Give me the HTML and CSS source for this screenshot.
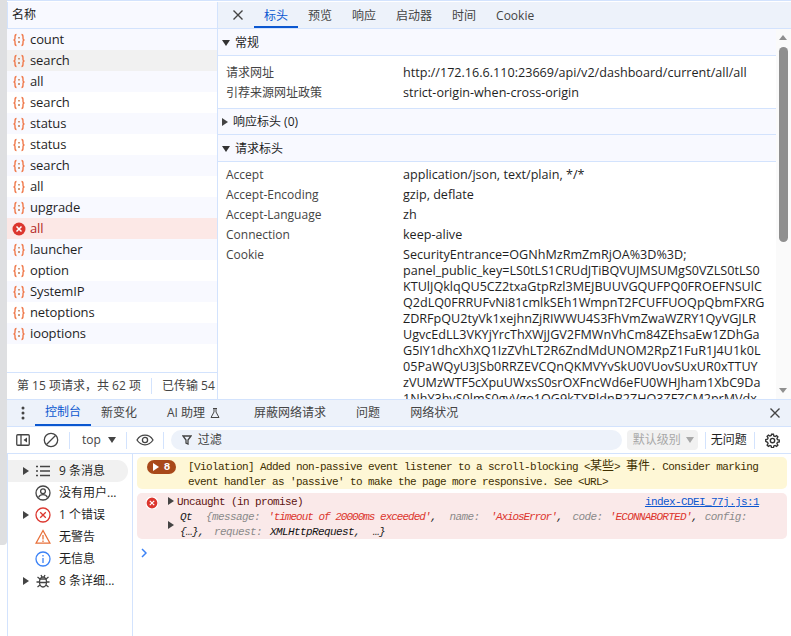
FILE: index.html
```html
<!DOCTYPE html>
<html lang="zh">
<head>
<meta charset="utf-8">
<title>DevTools</title>
<link rel="stylesheet" href="styles.css">
</head>
<body>
<div class="strip"></div>
<main class="devtools">
  <section class="top">
    <aside class="net">
      <div class="net-head">名称</div>
      <ul class="reqs">
        <li class="req"><svg class="ico"><use href="#fetch"/></svg>count</li>
        <li class="req hov"><svg class="ico"><use href="#fetch"/></svg>search</li>
        <li class="req"><svg class="ico"><use href="#fetch"/></svg>all</li>
        <li class="req"><svg class="ico"><use href="#fetch"/></svg>search</li>
        <li class="req"><svg class="ico"><use href="#fetch"/></svg>status</li>
        <li class="req"><svg class="ico"><use href="#fetch"/></svg>status</li>
        <li class="req"><svg class="ico"><use href="#fetch"/></svg>search</li>
        <li class="req"><svg class="ico"><use href="#fetch"/></svg>all</li>
        <li class="req"><svg class="ico"><use href="#fetch"/></svg>upgrade</li>
        <li class="req err"><svg class="ico"><use href="#errdot"/></svg>all</li>
        <li class="req"><svg class="ico"><use href="#fetch"/></svg>launcher</li>
        <li class="req"><svg class="ico"><use href="#fetch"/></svg>option</li>
        <li class="req"><svg class="ico"><use href="#fetch"/></svg>SystemIP</li>
        <li class="req"><svg class="ico"><use href="#fetch"/></svg>netoptions</li>
        <li class="req"><svg class="ico"><use href="#fetch"/></svg>iooptions</li>
      </ul>
      <div class="net-foot"><span class="foot-a">第 15 项请求，共 62 项</span><span class="foot-b">已传输 54</span></div>
    </aside>
    <div class="detail">
      <nav class="tabs">
        <svg class="x" viewBox="0 0 12 12"><path d="M1.500 1.500l9 9M10.500 1.500l-9 9"/></svg>
        <span class="tab on">标头</span><span class="tab">预览</span><span class="tab">响应</span><span class="tab">启动器</span><span class="tab">时间</span><span class="tab">Cookie</span>
      </nav>
      <div class="panel">
        <div class="scroll">
          <h3 class="sec sec-first"><i class="tri down"></i>常规</h3>
          <div class="rows first">
            <div class="row"><span class="k">请求网址</span><span class="v">http://172.16.6.110:23669/api/v2/dashboard/current/all/all</span></div>
            <div class="row"><span class="k">引荐来源网址政策</span><span class="v">strict-origin-when-cross-origin</span></div>
          </div>
          <h3 class="sec sec-line"><i class="tri right"></i>响应标头 (0)</h3>
          <h3 class="sec sec-third"><i class="tri down"></i>请求标头</h3>
          <div class="rows">
            <div class="row"><span class="k">Accept</span><span class="v">application/json, text/plain, */*</span></div>
            <div class="row"><span class="k">Accept-Encoding</span><span class="v">gzip, deflate</span></div>
            <div class="row"><span class="k">Accept-Language</span><span class="v">zh</span></div>
            <div class="row"><span class="k">Connection</span><span class="v">keep-alive</span></div>
            <div class="row"><span class="k">Cookie</span><span class="v">SecurityEntrance=OGNhMzRmZmRjOA%3D%3D;<br>panel_public_key=LS0tLS1CRUdJTiBQVUJMSUMgS0VZLS0tLS0<br>KTUlJQklqQU5CZ2txaGtpRzl3MEJBUUVGQUFPQ0FROEFNSUlC<br>Q2dLQ0FRRUFvNi81cmlkSEh1WmpnT2FCUFFUOQpQbmFXRG<br>ZDRFpQU2tyVk1xejhnZjRIWWU4S3FhVmZwaWZRY1QyVGJLR<br>UgvcEdLL3VKYjYrcThXWjJGV2FMWnVhCm84ZEhsaEw1ZDhGa<br>G5IY1dhcXhXQ1IzZVhLT2R6ZndMdUNOM2RpZ1FuR1J4U1k0L<br>05PaWQyU3JSb0RRZEVCQnQKMVYvSkU0VUovSUxUR0xTTUY<br>zVUMzWTF5cXpuUWxsS0srOXFncWd6eFU0WHJham1XbC9Da<br>1NhY3hyS0lmS0gvVgo1OG9kTXBldnB2ZHQ3ZFZCM2prMVdx</span></div>
          </div>
        </div>
        <div class="sbar"><i class="up"></i><b class="thumb"></b><i class="dn"></i></div>
      </div>
    </div>
  </section>
  <section class="drawer">
    <nav class="dtabs">
      <svg class="dots" viewBox="0 0 4 14"><circle cx="2" cy="2" r="1.500"/><circle cx="2" cy="7" r="1.500"/><circle cx="2" cy="12" r="1.500"/></svg>
      <span class="dtab on">控制台</span><span class="dtab">新变化</span><span class="dtab ai">AI 助理 <svg class="flask" viewBox="0 0 12 12"><path d="M4 1.500h4M5 1.500v3.500L2 10.500h8L7 5V1.500"/></svg></span><span class="dtab">屏蔽网络请求</span><span class="dtab">问题</span><span class="dtab">网络状况</span>
      <svg class="x dx" viewBox="0 0 12 12"><path d="M1.500 1.500l9 9M10.500 1.500l-9 9"/></svg>
    </nav>
    <div class="tool">
      <svg class="t-side" viewBox="0 0 14 14"><rect x="0.750" y="1.750" width="12.500" height="10.500" rx="1"/><path d="M5 2v10"/><path class="f" d="M11 4.500v5L7.500 7z"/></svg>
      <svg class="t-clear" viewBox="0 0 16 16"><circle cx="8" cy="8" r="6.700"/><path d="M3.500 12.500l9-9"/></svg>
      <i class="sep sep-a"></i>
      <span class="ctx">top<i class="tri down"></i></span>
      <i class="sep"></i>
      <svg class="t-eye" viewBox="0 0 18 12"><path d="M1 6c2-3.200 4.800-4.800 8-4.800S15 2.800 17 6c-2 3.200-4.800 4.800-8 4.800S3 9.200 1 6z"/><circle cx="9" cy="6" r="2.600"/></svg>
      <i class="sep"></i>
      <label class="filter"><svg viewBox="0 0 10 10"><path d="M1 1h8L6 5v4L4 8V5z"/></svg>过滤</label>
      <span class="level">默认级别<i class="tri down"></i></span>
      <i class="sep"></i>
      <span class="noissue">无问题</span>
      <i class="sep"></i>
      <svg class="t-gear" viewBox="0 0 24 24"><path d="M10.500 2h3l.6 2.800 2 .9 2.400-1.500 2.100 2.100-1.500 2.400.9 2 2.800.6v3l-2.800.6-.9 2 1.500 2.400-2.100 2.100-2.400-1.500-2 .9-.6 2.800h-3l-.6-2.800-2-.9-2.400 1.500-2.100-2.100 1.500-2.400-.9-2L1.200 13.500v-3l2.800-.6.900-2-1.500-2.400 2.100-2.100 2.400 1.500 2-.9z"/><circle cx="12" cy="12" r="3.500"/></svg>
    </div>
    <div class="console">
      <ul class="side">
        <li class="s-item sel"><i class="tri right"></i><svg class="s-ico" viewBox="0 0 16 16"><path class="dk" d="M5 3.500h10M5 8h10M5 12.500h10M1 3.500h2M1 8h2M1 12.500h2"/></svg>9 条消息</li>
        <li class="s-item"><i class="tri none"></i><svg class="s-ico" viewBox="0 0 16 16"><circle class="dk" cx="8" cy="8" r="7"/><circle class="dk" cx="8" cy="6.200" r="2.400"/><path class="dk" d="M3.500 12.500c1-2 2.600-2.800 4.500-2.800s3.500.8 4.500 2.800"/></svg>没有用户...</li>
        <li class="s-item"><i class="tri right"></i><svg class="s-ico" viewBox="0 0 16 16"><circle class="rd" cx="8" cy="8" r="7"/><path class="rd" d="M5.200 5.200l5.600 5.600M10.800 5.200l-5.600 5.600"/></svg>1 个错误</li>
        <li class="s-item"><i class="tri none"></i><svg class="s-ico" viewBox="0 0 16 16"><path class="og" d="M8 1.500l7 12.700H1z"/><path class="og" d="M8 6v4.500M8 11.500v1.500"/></svg>无警告</li>
        <li class="s-item"><i class="tri none"></i><svg class="s-ico" viewBox="0 0 16 16"><circle class="bl" cx="8" cy="8" r="7"/><path class="bl" d="M8 7v5M8 4v1.500"/></svg>无信息</li>
        <li class="s-item"><i class="tri right"></i><svg class="s-ico" viewBox="0 0 16 16"><ellipse class="dk" cx="8" cy="9" rx="3.500" ry="5"/><path class="dk" d="M4.500 6h7M4.500 9.500h7M1.500 9h2.500M12 9h2.500M2.500 4l2.500 2M13.500 4L11 6M2.500 14l2.500-2M13.500 14L11 12M6 2l1 2M10 2L9 4"/></svg>8 条详细...</li>
      </ul>
      <div class="log">
        <div class="msg warn">
          <span class="badge"><i class="tri right"></i>8</span>
          <p>[Violation] Added non-passive event listener to a scroll-blocking &lt;<span class="cjk">某些</span>&gt; <span class="cjk">事件</span>. Consider marking event handler as 'passive' to make the page more responsive. See &lt;URL&gt;</p>
        </div>
        <div class="msg error">
          <svg class="m-err" viewBox="0 0 12 12"><circle cx="6" cy="6" r="6"/><path d="M3.800 3.800l4.400 4.400M8.200 3.800l-4.400 4.400"/></svg>
          <div class="m-body">
            <div class="m-line"><span><i class="tri right"></i>Uncaught (in promise)</span><a class="src">index-CDEI_77j.js:1</a></div>
            <div class="m-obj"><i class="tri right"></i><em><span class="qt">Qt</span><span class="g">{message:</span><span class="r r1">'timeout of 20000ms exceeded'</span>,<span class="g g-n">name:</span><span class="r r2">'AxiosError'</span>,<span class="g g-c">code:</span><span class="r r3">'ECONNABORTED'</span>,<span class="g g-f">config:</span><br>{…},<span class="g g-r">request:</span><b>XMLHttpRequest</b>,<span class="more">…}</span></em></div>
          </div>
        </div>
        <svg class="prompt" viewBox="0 0 6 10"><path d="M1 1l4 4-4 4"/></svg>
      </div>
    </div>
  </section>
</main>
<svg class="defs" aria-hidden="true">
  <symbol id="fetch" viewBox="0 0 14 14">
    <path d="M4.500 1.500C3 1.500 3 2.500 3 4v1.500C3 6.500 2.500 7 1.500 7c1 0 1.500.5 1.500 1.500V10c0 1.500 0 2.500 1.500 2.500M9.500 1.500c1.500 0 1.500 1 1.500 2.500v1.500c0 1 .5 1.500 1.500 1.500-1 0-1.500.5-1.500 1.500V10c0 1.500 0 2.500-1.500 2.500" fill="none" stroke="#f0794b" stroke-width="1.400"/>
    <path d="M7 4v1.500M7 8v2" stroke="#c0703f" stroke-width="1.400"/>
  </symbol>
  <symbol id="errdot" viewBox="0 0 14 14">
    <circle cx="7" cy="7" r="6.500" fill="#dc362e"/>
    <path d="M4.500 4.500l5 5M9.500 4.500l-5 5" stroke="#fff" stroke-width="1.500"/>
  </symbol>
</svg>
</body>
</html>
```

FILE: styles.css
```css
* { box-sizing: border-box; }
html, body { margin: 0; height: 100%; }
body {
  display: flex; width: 791px; height: 636px; overflow: hidden; background: #fff;
  font: 12px/20px "Open Sans", "Noto Sans CJK SC", sans-serif; color: #1f1f1f;
}
ul { list-style: none; margin: 0; padding: 0; }
p, h3 { margin: 0; }
.defs { width: 0; height: 0; position: absolute; }
.strip { width: 7px; height: 545px; background: #dedfe1; border-radius: 0 0 4px 0; flex: none; }
.devtools { flex: 1; min-width: 0; display: flex; flex-direction: column; padding-top: 1px; border-top: 1px solid #d3e3fd; }
.tri { display: inline-block; width: 0; height: 0; flex: none; }
.tri.down { border: 4px solid transparent; border-top: 6px solid #333; border-bottom: 0; }
.tri.right { border: 4px solid transparent; border-left: 6px solid #444; border-right: 0; }
.tri.none { width: 6px; }

.top { height: 398px; display: flex; border-bottom: 1px solid #d3e3fd; flex: none; }
.net { width: 211px; flex: none; display: flex; flex-direction: column; border-right: 1px solid #d3e3fd; }
.net-head { height: 27px; flex: none; padding-left: 4px; line-height: 25px; background: #f8f9ff; border-bottom: 1px solid #d3e3fd; border-left: 1px solid #d3e3fd; }
.reqs { flex: 1; }
.req { height: 21px; display: flex; align-items: center; padding-left: 5px; font-size: 13px; line-height: 21px; letter-spacing: -.1px; }
.req:nth-child(odd) { background: #f8f9ff; }
.req:nth-child(even) { background: #fff; }
.req.hov { background: #f1f1f1; }
.req.err { background: #fce8e6; color: #b3261e; }
.ico { width: 14px; height: 14px; margin-right: 4px; flex: none; }
.net-foot { height: 27px; flex: none; border-top: 1px solid #d3e3fd; display: flex; align-items: center; padding-left: 10px; white-space: nowrap; overflow: hidden; color: #444; }
.foot-a { padding-right: 10px; border-right: 1px solid #d3e3fd; line-height: 16px; }
.foot-b { padding-left: 10px; }

.detail { flex: 1; min-width: 0; display: flex; flex-direction: column; }
.tabs { height: 27px; flex: none; display: flex; align-items: center; background: #edf2fa; border-bottom: 1px solid #d3e3fd; padding-left: 14px; color: #444; }
.x { width: 12px; height: 12px; fill: none; stroke: #444; stroke-width: 1.400; flex: none; margin-right: 10px; }
.tab { height: 26px; line-height: 27px; padding: 0 10px; }
.tab.on { color: #0b57d0; border-bottom: 2px solid #0b57d0; }
.panel { flex: 1; min-height: 0; display: flex; }
.scroll { flex: 1; min-width: 0; overflow: hidden; }
.sec { height: 27px; background: #f8f9ff; font: 12px/24px "Open Sans", "Noto Sans CJK SC", sans-serif; display: flex; align-items: center; gap: 5px; padding-left: 4px; border-bottom: 1px solid #d3e3fd; color: #1f1f1f; }
.sec-first { padding-top: 2px; }
.sec-line { border-top: 1px solid #d3e3fd; }
.sec-third { padding-top: 1px; }
.rows { padding: 3px 0 0; }
.rows.first { padding: 7px 0 0; height: 52px; }
.row { display: flex; line-height: 20px; }
.k { width: 185px; padding-left: 8px; flex: none; color: #444; }
.v { flex: 1; white-space: nowrap; font-size: 12.600px; line-height: 16px; padding: 2px 0; }
.sbar { width: 15px; flex: none; position: relative; background: #fafafa; }
.thumb { position: absolute; left: 3px; right: 3px; top: 18px; height: 195px; background: #8f8f8f; border-radius: 5px; }
.up, .dn { position: absolute; left: 3px; width: 0; height: 0; border: 4.500px solid transparent; }
.up { top: 6px; border-bottom: 5px solid #8f8f8f; border-top: 0; }
.dn { bottom: 6px; border-top: 5px solid #8f8f8f; border-bottom: 0; }

.drawer { flex: 1; min-height: 0; display: flex; flex-direction: column; }
.dtabs { height: 27px; flex: none; background: #edf2fa; display: flex; align-items: center; padding-left: 14px; color: #444; border-bottom: 1px solid #d3e3fd; }
.dots { width: 4px; height: 14px; fill: #444; flex: none; margin-right: 10px; }
.dtab { height: 26px; line-height: 26px; padding: 0 10px; margin-right: 10px; white-space: nowrap; display: flex; align-items: center; gap: 4px; }
.dtab.on { color: #0b57d0; border-bottom: 2px solid #0b57d0; margin-right: 0; }
.dtab.ai { margin-right: 13px; }
.flask { width: 12px; height: 12px; fill: none; stroke: #444; }
.dx { margin: 0 10px 0 auto; }
.tool { height: 27px; flex: none; display: flex; align-items: center; padding-left: 9px; border-bottom: 1px solid #d3e3fd; color: #444; line-height: 18px; }
.tool svg { flex: none; fill: none; stroke: #444; stroke-width: 1.300; }
.t-side { width: 14px; height: 14px; }
.t-side .f { fill: #444; stroke: none; }
.t-clear { width: 16px; height: 16px; margin-left: 13px; }
.sep { width: 1px; height: 17px; background: #d3e3fd; flex: none; }
.sep-a { margin-left: 10px; }
.ctx { display: flex; align-items: center; gap: 7px; padding: 0 10px 0 12px; font-size: 12px; }
.ctx .tri.down { border-top-color: #444; }
.t-eye { width: 18px; height: 12px; margin: 0 9px; }
.filter { flex: 0 0 451px; margin-left: 7px; height: 20px; border-radius: 10px; background: #edf2fa; display: flex; align-items: center; gap: 6px; padding-left: 11px; color: #444; }
.filter svg { width: 10px; height: 10px; }
.level { width: 71px; margin: 0 7px 0 5px; height: 20px; border-radius: 4px; background: #f1f1f1; color: #a8a8a8; display: flex; align-items: center; gap: 5px; padding-left: 6px; }
.level .tri.down { border-top-color: #a8a8a8; }
.noissue { padding: 0 7px 0 5px; color: #1f1f1f; }
.tool .t-gear { width: 15px; height: 15px; margin-left: 10px; stroke-width: 2.200; stroke: #333; }

.console { flex: 1; min-height: 0; display: flex; }
.side { width: 126px; flex: none; border-right: 1px solid #d3e3fd; border-left: 1px solid #d3e3fd; padding-top: 6px; }
.s-item { height: 22px; display: flex; align-items: center; padding-left: 15px; margin-right: 4px; white-space: nowrap; color: #1f1f1f; border-radius: 0 11px 11px 0; }
.s-item.sel { background: #f1f1f1; }
.s-ico { width: 16px; height: 16px; flex: none; margin: 0 8px 0 6px; fill: none; stroke-width: 1.300; }
.dk { stroke: #444; } .rd { stroke: #dc362e; } .og { stroke: #e8703a; } .bl { stroke: #3b82f6; }
.log { flex: 1; min-width: 0; padding: 3px 4px 0 4px; font: 11px/15px "Liberation Mono", "Noto Sans CJK SC", monospace; letter-spacing: -.6px; }
.msg { border-radius: 5px; display: flex; }
.msg p { line-height: 15px; }
.warn { background: #fef7d6; height: 32px; padding: 2px 10px 0 10px; color: #412f00; gap: 12px; }
.badge { width: 29px; height: 14px; margin-top: 1px; border-radius: 7px; background: #a8491a; color: #fff; display: flex; align-items: center; justify-content: center; gap: 5px; font-weight: 700; flex: none; letter-spacing: 0; }
.badge .tri.right { border-left-color: #fff; }
.cjk { font: 12px/1 "Noto Sans CJK SC", sans-serif; letter-spacing: 0; }
.error { margin-top: 4px; background: #fae9e9; height: 46px; padding: 2px 8px 0 9px; color: #5e1410; gap: 10px; }
.m-err { width: 12px; height: 12px; flex: none; margin: 2px 0 0 0; fill: #dc362e; stroke: #fff; stroke-width: 1.200; }
.m-body { flex: 1; min-width: 0; }
.m-line { display: flex; justify-content: space-between; padding-right: 20px; color: #5e1410; line-height: 15px; }
.m-line .tri { margin-right: 3px; }
.src { color: #0b57d0; text-decoration: underline; }
.m-obj { display: flex; align-items: center; gap: 6px; color: #222; line-height: 15px; }
.m-obj em { white-space: nowrap; }
.m-obj b { font-weight: 400; color: #111; margin-left: 8px; }
.qt { margin-right: 14px; }
.g { color: #8a8a8a; }
.r { color: #dc362e; }
.r1 { margin-left: 8px; letter-spacing: -1px; }
.r2 { margin-left: 11px; letter-spacing: -1.100px; }
.r3 { margin-left: 7px; letter-spacing: -.74px; }
.g-n { margin-left: 13px; }
.g-c { margin-left: 10px; }
.g-f { margin-left: 7px; }
.g-r { margin-left: 10px; }
.more { margin-left: 13px; }
.prompt { display: block; width: 6px; height: 10px; margin: 9px 0 0 4px; fill: none; stroke: #3b82f6; stroke-width: 1.500; }
```
